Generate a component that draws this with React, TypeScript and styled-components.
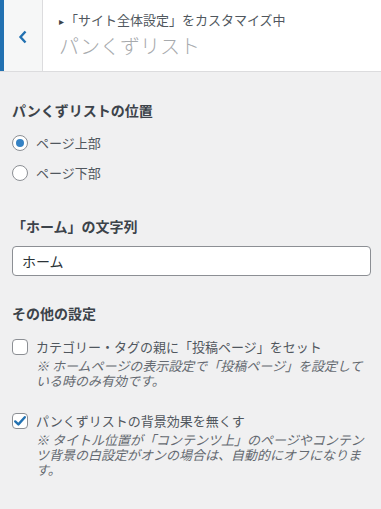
import { FC, ReactNode } from 'react';
import styled, { createGlobalStyle } from 'styled-components';

const GlobalStyle = createGlobalStyle`
  html, body {
    margin: 0;
    padding: 0;
    background: #f0f0f1;
  }
  body {
    font-family: 'Noto Sans CJK JP', 'Noto Sans', sans-serif;
    color: #3c434a;
  }
`;

interface ICheckRowProps {
  label: string;
  description: string;
  checked?: boolean;
}

const CheckRow: FC<ICheckRowProps> = ({ label, description, checked }) => (
  <SCheckRow>
    <SCheckbox>
      {checked && (
        <svg width='16' height='16' viewBox='0 0 16 16'>
          <path d='M3.2 8.4 L6.4 11.4 L12.8 4.2' fill='none' stroke='#2271b1' strokeWidth='2.4' strokeLinecap='round' strokeLinejoin='round' />
        </svg>
      )}
    </SCheckbox>
    <SCheckBody>
      <SLabel>{label}</SLabel>
      <SDescription>{description}</SDescription>
    </SCheckBody>
  </SCheckRow>
);

const RadioRow: FC<{ checked?: boolean; children: ReactNode }> = ({ checked, children }) => (
  <SRadioRow>
    <SRadio $checked={checked} />
    <SLabel>{children}</SLabel>
  </SRadioRow>
);

export default function App() {
  return (
    <>
      <GlobalStyle />
      <SPanel>
        <SHeader>
          <SBackButton>
            <svg width='10' height='14' viewBox='0 0 10 14'>
              <path d='M7.5 1.5 L2.5 7 L7.5 12.5' fill='none' stroke='#2271b1' strokeWidth='2.4' />
            </svg>
          </SBackButton>
          <SHeaderText>
            <SAction>
              <SArrow>▸</SArrow>「サイト全体設定」をカスタマイズ中
            </SAction>
            <STitle>パンくずリスト</STitle>
          </SHeaderText>
        </SHeader>
        <SContent>
          <SSection>
            <SSectionTitle>パンくずリストの位置</SSectionTitle>
            <SRadioList>
              <RadioRow checked>ページ上部</RadioRow>
              <RadioRow>ページ下部</RadioRow>
            </SRadioList>
          </SSection>
          <SSection>
            <SSectionTitle>「ホーム」の文字列</SSectionTitle>
            <SInput defaultValue='ホーム' />
          </SSection>
          <SSection>
            <SSectionTitle>その他の設定</SSectionTitle>
            <SCheckList>
              <CheckRow
                label='カテゴリー・タグの親に「投稿ページ」をセット'
                description='※ ホームページの表示設定で「投稿ページ」を設定している時のみ有効です。'
              />
              <CheckRow
                checked
                label='パンくずリストの背景効果を無くす'
                description='※ タイトル位置が「コンテンツ上」のページやコンテンツ背景の白設定がオンの場合は、自動的にオフになります。'
              />
            </SCheckList>
          </SSection>
        </SContent>
      </SPanel>
    </>
  );
}

const SPanel = styled.div`
  width: 381px;
  min-height: 509px;
  background: #f0f0f1;
`;

const SHeader = styled.div`
  display: flex;
  height: 71px;
  background: #ffffff;
  border-bottom: 1px solid #dcdcde;
`;

const SBackButton = styled.div`
  display: flex;
  align-items: center;
  justify-content: center;
  width: 43px;
  padding-top: 2px;
  box-sizing: border-box;
  background: #f6f7f7;
  border-left: 4px solid #2271b1;
  border-right: 1px solid #dcdcde;
`;

const SHeaderText = styled.div`
  display: flex;
  flex-direction: column;
  padding: 11px 0 0 16px;
`;

const SAction = styled.div`
  font-size: 13px;
  line-height: 18px;
  color: #50575e;
`;

const SArrow = styled.span`
  display: inline-block;
  font-size: 10px;
  color: #3c434a;
  margin-right: 1px;
`;

const STitle = styled.div`
  margin-top: 4px;
  font-size: 20px;
  line-height: 24px;
  font-weight: 300;
  color: #a7aaad;
`;

const SContent = styled.div`
  display: flex;
  flex-direction: column;
  gap: 27px;
  padding: 28px 10px 0 12px;
`;

const SSection = styled.div`
  display: flex;
  flex-direction: column;
`;

const SSectionTitle = styled.div`
  font-size: 14px;
  line-height: 20px;
  font-weight: 700;
  color: #3c434a;
  margin-bottom: 10px;
`;

const SRadioList = styled.div`
  display: flex;
  flex-direction: column;
  gap: 10px;
  margin: 3px 0 6px;
`;

const SRadioRow = styled.div`
  display: flex;
  align-items: center;
  gap: 8px;
  height: 20px;
`;

const SRadio = styled.span<{ $checked?: boolean }>`
  position: relative;
  width: 16px;
  height: 16px;
  box-sizing: border-box;
  border: 1px solid #8c8f94;
  border-radius: 50%;
  background: #ffffff;

  &::after {
    content: '';
    display: ${({ $checked }) => ($checked ? 'block' : 'none')};
    position: absolute;
    top: 3px;
    left: 3px;
    width: 8px;
    height: 8px;
    border-radius: 50%;
    background: #3582c4;
  }
`;

const SLabel = styled.div`
  font-size: 13px;
  line-height: 16px;
  color: #50575e;
`;

const SInput = styled.input`
  height: 30px;
  box-sizing: border-box;
  padding: 0 9px;
  border: 1px solid #8c8f94;
  border-radius: 4px;
  background: #ffffff;
  font-family: inherit;
  font-size: 14px;
  color: #2c3338;
  outline: none;
`;

const SCheckList = styled.div`
  display: flex;
  flex-direction: column;
  gap: 25px;
  margin-top: 6px;
`;

const SCheckRow = styled.div`
  display: flex;
  gap: 8px;
`;

const SCheckbox = styled.span`
  flex-shrink: 0;
  width: 16px;
  height: 16px;
  box-sizing: border-box;
  border: 1px solid #8c8f94;
  border-radius: 4px;
  background: #ffffff;

  svg {
    display: block;
    margin: -1px;
  }
`;

const SCheckBody = styled.div`
  display: flex;
  flex-direction: column;
  gap: 3px;
`;

const SDescription = styled.div`
  font-size: 13px;
  line-height: 15px;
  font-style: italic;
  color: #646970;
`;
